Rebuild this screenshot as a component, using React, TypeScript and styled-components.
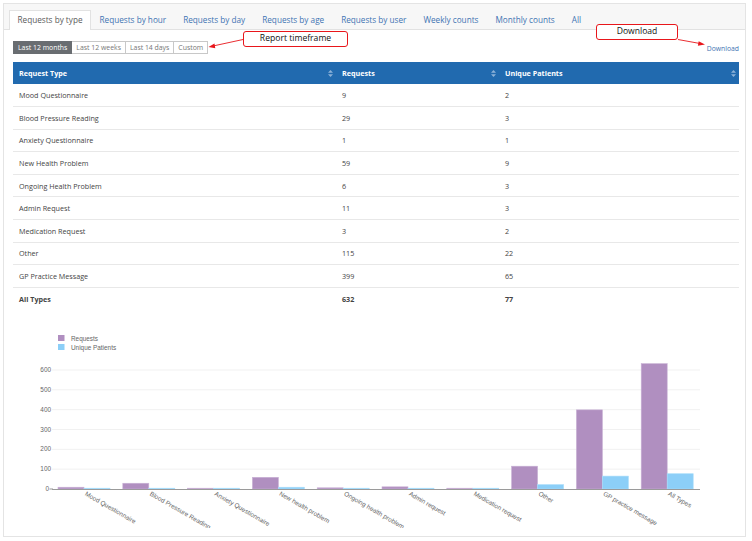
import React from 'react';
import styled, {createGlobalStyle} from "styled-components";

const GlobalStyle = createGlobalStyle`
    html, body {
        margin: 0;
        padding: 0;
        background: #ffffff;
    }
    body {
        font-family: "Open Sans", "Liberation Sans", sans-serif;
    }
`

type RowType = {
    name: string
    label: string
    requests: number
    patients: number
}

const rows: RowType[] = [
    {name: "Mood Questionnaire", label: "Mood Questionnaire", requests: 9, patients: 2},
    {name: "Blood Pressure Reading", label: "Blood Pressure Reading", requests: 29, patients: 3},
    {name: "Anxiety Questionnaire", label: "Anxiety Questionnaire", requests: 1, patients: 1},
    {name: "New Health Problem", label: "New health problem", requests: 59, patients: 9},
    {name: "Ongoing Health Problem", label: "Ongoing health problem", requests: 6, patients: 3},
    {name: "Admin Request", label: "Admin request", requests: 11, patients: 3},
    {name: "Medication Request", label: "Medication request", requests: 3, patients: 2},
    {name: "Other", label: "Other", requests: 115, patients: 22},
    {name: "GP Practice Message", label: "GP practice message", requests: 399, patients: 65},
]
const total: RowType = {name: "All Types", label: "All Types", requests: 632, patients: 77}

const tabs = ["Requests by type", "Requests by hour", "Requests by day", "Requests by age",
    "Requests by user", "Weekly counts", "Monthly counts", "All"]
const ranges = ["Last 12 months", "Last 12 weeks", "Last 14 days", "Custom"]

const SortIcon = () => (
    <SortSvg width="5" height="7" viewBox="0 0 5 7">
        <path d="M2.5 0 L5 2.8 H0 Z" fill="#8db2d8"/>
        <path d="M2.5 7 L5 4.2 H0 Z" fill="#8db2d8"/>
    </SortSvg>
)

// chart geometry, in page pixels
const plotLeft = 52
const plotRight = 700
const baseY = 489
const perUnit = 119 / 600
const groupW = (plotRight - plotLeft) / 10

const Chart = () => {
    const data = [...rows, total]
    return (
        <ChartSvg width="742" height="218" viewBox="4 310 742 218">
            <rect x="58" y="335" width="6.5" height="6" fill="#b08fc0"/>
            <LegendText x="71" y="340.5">Requests</LegendText>
            <rect x="58" y="344" width="6.5" height="6" fill="#8ccff8"/>
            <LegendText x="71" y="349.5">Unique Patients</LegendText>

            {[600, 500, 400, 300, 200, 100, 0].map(v => {
                const y = baseY - v * perUnit
                return (
                    <g key={v}>
                        {v > 0 && <line x1={plotLeft} x2={plotRight} y1={y} y2={y} stroke="#f1f1f1" strokeWidth="1"/>}
                        <AxisText x={v > 0 ? 51 : 49} y={y + 2} textAnchor="end">{v}</AxisText>
                    </g>
                )
            })}
            <line x1="49.5" x2={plotLeft + 1} y1={baseY} y2={baseY} stroke="#999" strokeWidth="1"/>

            {data.map((d, i) => {
                const gx = plotLeft + groupW * i
                const hr = Math.max(d.requests * perUnit, 0.8)
                const hp = Math.max(d.patients * perUnit, 0.8)
                const cx = gx + groupW / 2
                return (
                    <g key={d.label}>
                        <rect x={gx + 6} y={baseY - hr} width="26" height={hr}
                              fill="#b08fc0" stroke="#c9b1d5" strokeWidth="0.6"/>
                        <rect x={gx + 32} y={baseY - hp} width="26" height={hp}
                              fill="#8ccff8" stroke="#a8dcfa" strokeWidth="0.6"/>
                        <AxisText x={cx} y={baseY + 6} transform={`rotate(30 ${cx} ${baseY + 6})`}>
                            {d.label}
                        </AxisText>
                    </g>
                )
            })}
            <line x1={plotLeft} x2={plotRight} y1={baseY + 0.5} y2={baseY + 0.5} stroke="#9a9a9a" strokeWidth="1"/>
        </ChartSvg>
    )
}

export default function App() {
    return (
        <>
            <GlobalStyle/>
            <Frame>
                <TabBar>
                    {tabs.map((t, i) => (
                        <Tab key={t} active={i === 0}>{t}</Tab>
                    ))}
                </TabBar>

                <Body>
                    <Toolbar>
                        <ButtonGroup>
                            {ranges.map((r, i) => (
                                <RangeButton key={r} active={i === 0}>{r}</RangeButton>
                            ))}
                        </ButtonGroup>
                        <DownloadLink href="#">Download</DownloadLink>
                    </Toolbar>

                    <Table>
                        <colgroup>
                            <col style={{width: 323}}/>
                            <col style={{width: 163}}/>
                            <col/>
                        </colgroup>
                        <thead>
                        <tr>
                            <Th><HeadInner>Request Type<SortIcon/></HeadInner></Th>
                            <Th><HeadInner>Requests<SortIcon/></HeadInner></Th>
                            <Th><HeadInner>Unique Patients<SortIcon/></HeadInner></Th>
                        </tr>
                        </thead>
                        <tbody>
                        {rows.map(r => (
                            <Row key={r.name}>
                                <Td>{r.name}</Td>
                                <Td>{r.requests}</Td>
                                <Td>{r.patients}</Td>
                            </Row>
                        ))}
                        <Row total>
                            <Td>{total.name}</Td>
                            <Td>{total.requests}</Td>
                            <Td>{total.patients}</Td>
                        </Row>
                        </tbody>
                    </Table>

                    <Chart/>
                </Body>

                <Callout left={239} top={27} width={105}>Report timeframe</Callout>
                <Callout left={592} top={20} width={82}>Download</Callout>
                <ArrowLayer width="741" height="532" viewBox="4 4 741 532">
                    <line x1="243" y1="39.5" x2="213" y2="46" stroke="#e8161b" strokeWidth="0.9"/>
                    <path d="M208.5 47 L214.5 43.6 L215.3 48.2 Z" fill="#e8161b"/>
                    <line x1="678" y1="39.5" x2="700" y2="43.5" stroke="#e8161b" strokeWidth="0.9"/>
                    <path d="M705 44.4 L698.7 41.3 L697.9 45.8 Z" fill="#e8161b"/>
                </ArrowLayer>
            </Frame>
        </>
    );
}

const Frame = styled.div`
    position: relative;
    box-sizing: border-box;
    margin: 3px 0 0 3px;
    width: 743px;
    height: 534px;
    border: 1px solid #e4e4e4;
    background: #ffffff;
    overflow: hidden;
`
const TabBar = styled.div`
    display: flex;
    align-items: flex-end;
    box-sizing: border-box;
    height: 26px;
    padding: 0 5px;
    background: #f7f7f7;
    border-bottom: 1px solid #e2e2e2;
`
const Tab = styled.div<{ active?: boolean }>`
    box-sizing: border-box;
    height: 20px;
    padding: 0 7.5px;
    margin-bottom: -1px;
    font-size: 8.2px;
    line-height: 18px;
    white-space: nowrap;
    color: ${props => props.active ? "#5b5b5b" : "#3f74b3"};
    background: ${props => props.active ? "#ffffff" : "transparent"};
    border: 1px solid ${props => props.active ? "#e2e2e2" : "transparent"};
    border-bottom: none;
`
const Body = styled.div`
    padding: 0 6px 0 9px;
`
const Toolbar = styled.div`
    display: flex;
    justify-content: space-between;
    align-items: center;
    margin-top: 11px;
    height: 13px;
`
const ButtonGroup = styled.div`
    display: flex;
`
const RangeButton = styled.div<{ active?: boolean }>`
    box-sizing: border-box;
    height: 13px;
    padding: 0 4px;
    font-size: 6.9px;
    line-height: 11px;
    white-space: nowrap;
    color: ${props => props.active ? "#ffffff" : "#777777"};
    background: ${props => props.active ? "#696d71" : "#ffffff"};
    border: 1px solid ${props => props.active ? "#696d71" : "#c8c8c8"};
    & + & {
        border-left: none;
    }
`
const DownloadLink = styled.a`
    font-size: 6.8px;
    color: #3f74b3;
    text-decoration: none;
    margin-top: 1px;
`
const Table = styled.table`
    width: 726px;
    margin-top: 8px;
    border-collapse: collapse;
    table-layout: fixed;
    font-size: 7.2px;
`
const Th = styled.th`
    height: 22px;
    padding: 0 3px 0 6px;
    background: #216aaf;
    color: #ffffff;
    font-weight: 700;
    text-align: left;
`
const HeadInner = styled.div`
    display: flex;
    justify-content: space-between;
    align-items: center;
`
const SortSvg = styled.svg`
    display: block;
`
const Row = styled.tr<{ total?: boolean }>`
    height: 22.6px;
    font-weight: ${props => props.total ? 700 : 400};
    border-bottom: ${props => props.total ? "none" : "1px solid #e8e8e8"};
`
const Td = styled.td`
    padding: 0 6px;
    white-space: nowrap;
    color: #444444;
`
const ChartSvg = styled.svg`
    display: block;
    margin-left: -9px;
    font-family: "Liberation Sans", Arial, sans-serif;
`
const LegendText = styled.text`
    font-size: 6.4px;
    fill: #666666;
`
const AxisText = styled.text`
    font-size: 6.4px;
    fill: #666666;
`
const Callout = styled.div<{ left: number, top: number, width: number }>`
    position: absolute;
    left: ${props => props.left}px;
    top: ${props => props.top}px;
    width: ${props => props.width}px;
    height: 16px;
    box-sizing: border-box;
    border: 1.4px solid #e8161b;
    border-radius: 3px;
    background: #ffffff;
    font-family: "Open Sans", "Liberation Sans", sans-serif;
    font-size: 8.6px;
    line-height: 13px;
    color: #111111;
    text-align: center;
`
const ArrowLayer = styled.svg`
    position: absolute;
    left: 0;
    top: 0;
    pointer-events: none;
`
